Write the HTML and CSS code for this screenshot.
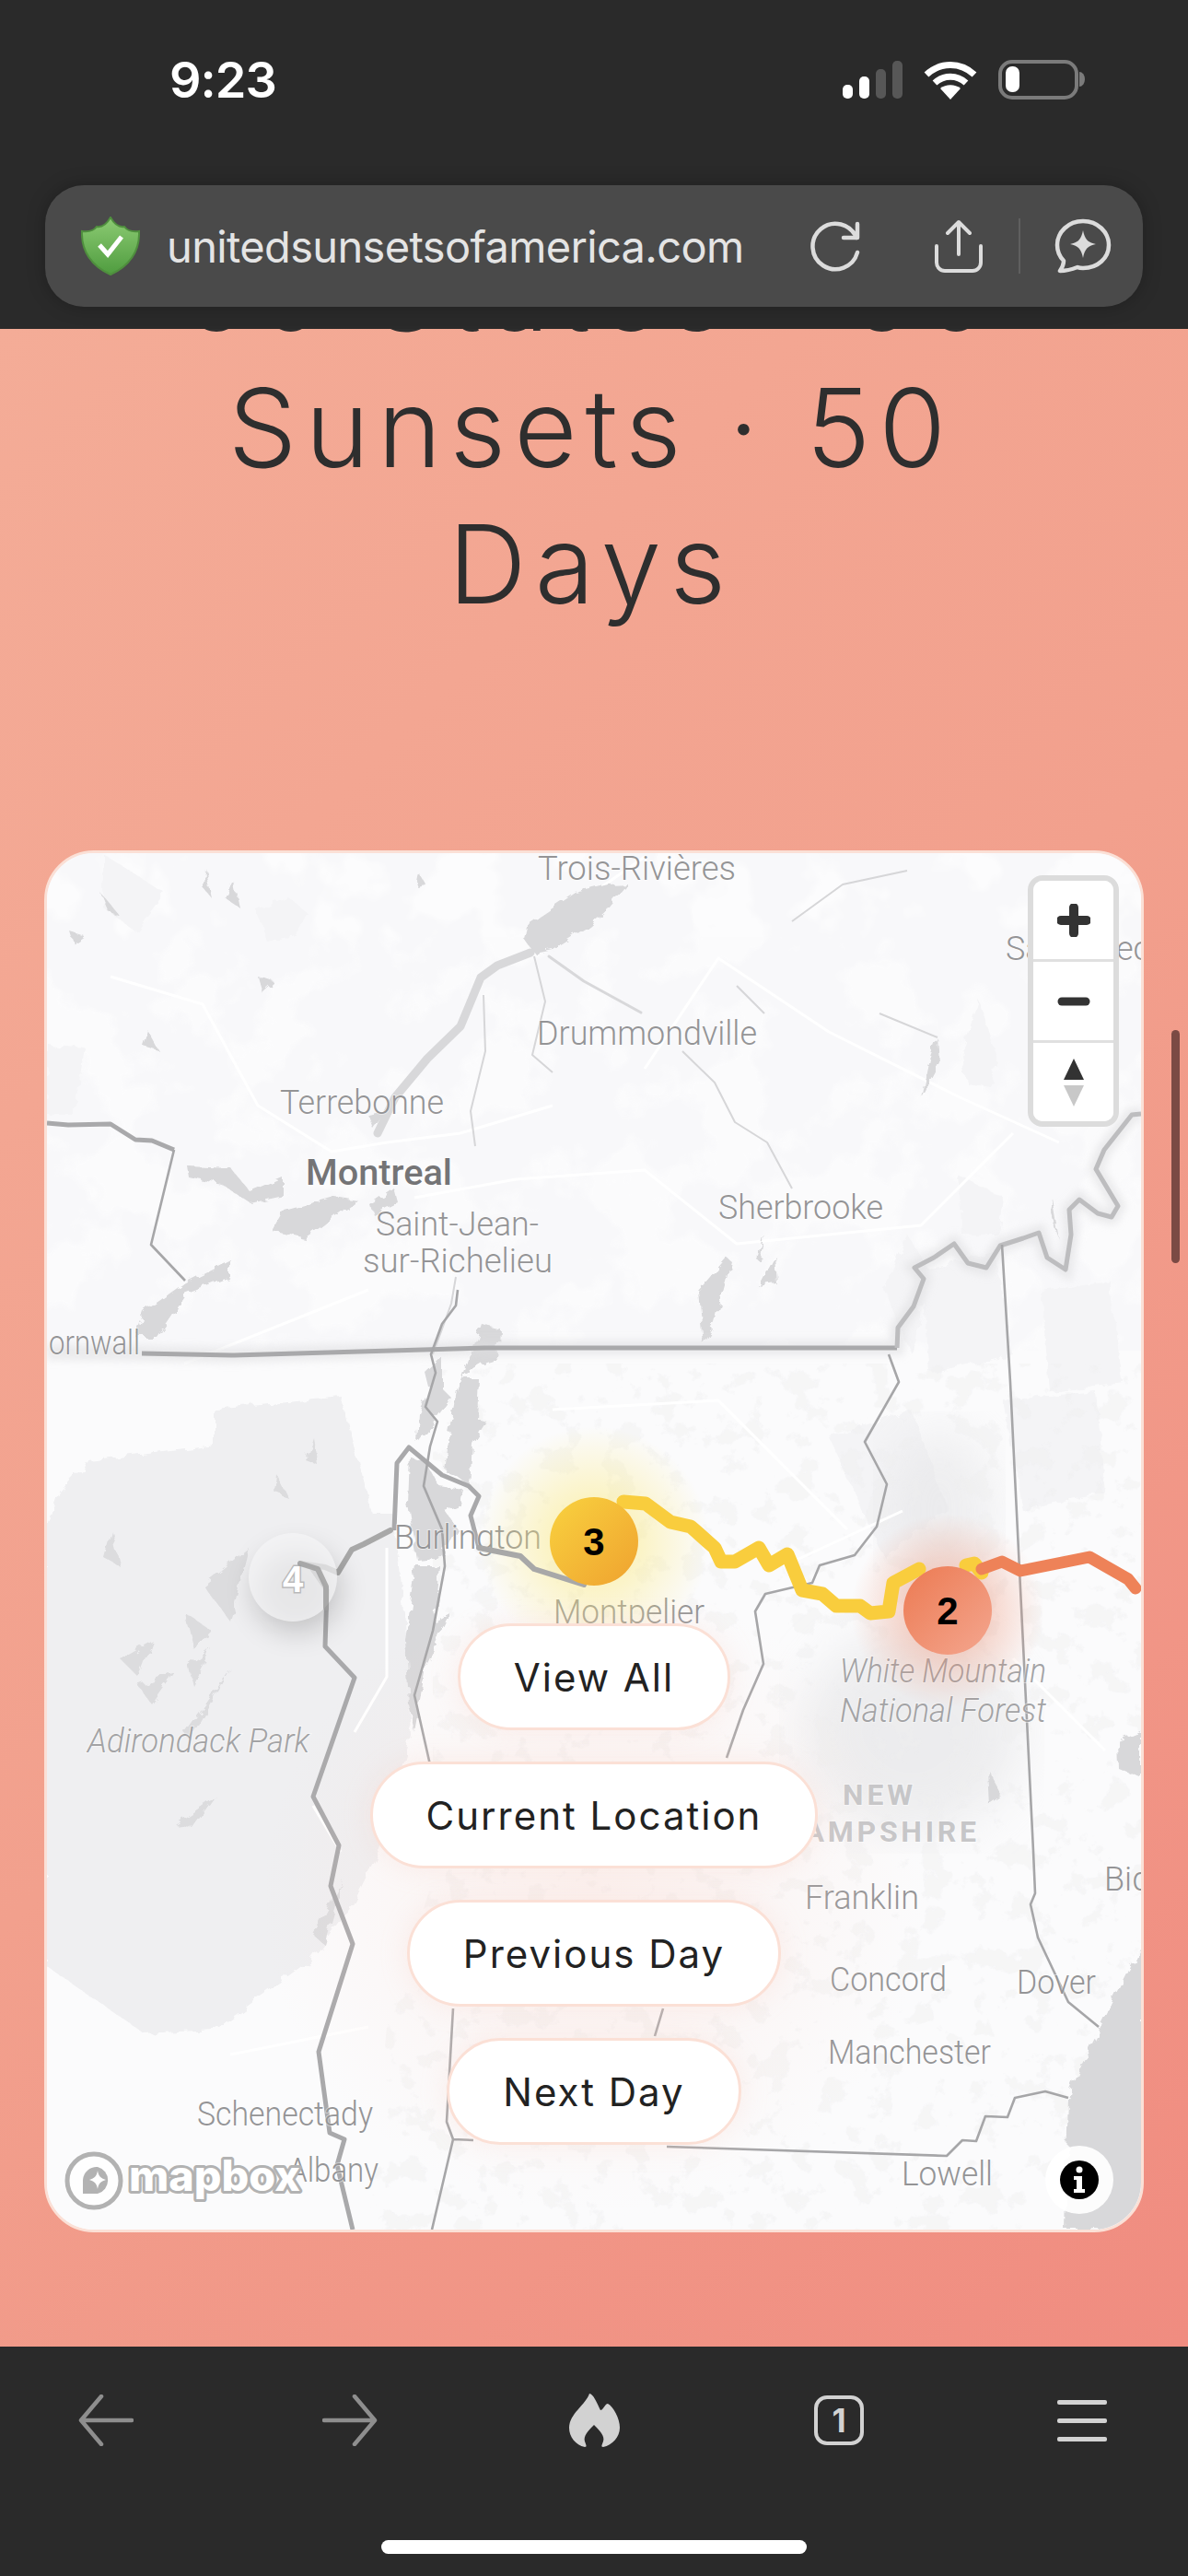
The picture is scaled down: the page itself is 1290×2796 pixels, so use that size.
FILE: index.html
```html
<!DOCTYPE html>
<html lang="en">
<head>
<meta charset="utf-8">
<title>United Sunsets of America</title>
<link rel="stylesheet" href="styles.css">
</head>
<body>
<div class="phone">
  <header class="top">
    <div class="status">
      <span class="time">9:23</span>
      <div class="status-icons">
        <svg class="ic-signal" width="65" height="41" viewBox="0 0 65 41"><rect x="0" y="26" width="11" height="15" rx="5" fill="#fff"/><rect x="18" y="17" width="11" height="24" rx="5" fill="#fff"/><rect x="36" y="9" width="11" height="32" rx="5" fill="#575757"/><rect x="54" y="0" width="11" height="41" rx="5" fill="#575757"/></svg>
        <svg class="ic-wifi" width="58" height="42" viewBox="0 0 58 42"><path d="M3 15C18 1 40 1 55 15M12 24C22 15 36 15 46 24" fill="none" stroke="#fff" stroke-width="7"/><path d="M29 42L18 30C24 25 34 25 40 30Z" fill="#fff"/></svg>
        <svg class="ic-batt" width="94" height="43" viewBox="0 0 94 43"><rect x="2" y="2" width="83" height="39" rx="13" fill="none" stroke="#7b7b7b" stroke-width="4"/><rect x="8" y="7" width="15" height="28" rx="7" fill="#fff"/><path d="M88 13a6 8 0 0 1 0 16Z" fill="#7b7b7b"/></svg>
      </div>
    </div>
    <div class="urlbar">
      <svg class="ic-shield" width="64" height="64" viewBox="0 0 64 64"><defs><linearGradient id="sh" x1="0" y1="0" x2="0" y2="1"><stop offset="0" stop-color="#8ccb73"/><stop offset="1" stop-color="#4f9c3f"/></linearGradient></defs><path d="M32 1C36 8 41 12 47 11C50 15 56 17 63 16C64 38 52 54 32 63C12 54 0 38 1 16C8 17 14 15 17 11C23 12 28 8 32 1Z" fill="url(#sh)" stroke="#4f8f3e" stroke-width="2"/><path d="M20 31L29 41L44 22" fill="none" stroke="#fff" stroke-width="5"/></svg>
      <span class="url">unitedsunsetsofamerica.com</span>
      <svg class="ic-reload" width="56" height="56" viewBox="0 0 56 56"><path d="M50 19A24.7 24.7 0 1 0 51 35" fill="none" stroke="#dcdcdc" stroke-width="4.5" stroke-linecap="round"/><path d="M51 4V19H36" fill="none" stroke="#dcdcdc" stroke-width="4.5" stroke-linecap="round" stroke-linejoin="round"/></svg>
      <svg class="ic-share" width="54" height="58" viewBox="0 0 54 58"><path d="M27 3V38M15 15L27 3L39 15M3 29V47A9 9 0 0 0 12 56H42A9 9 0 0 0 51 47V29" fill="none" stroke="#dcdcdc" stroke-width="4" stroke-linecap="round" stroke-linejoin="round"/></svg>
      <span class="url-sep"></span>
      <svg class="ic-chat" width="62" height="60" viewBox="0 0 62 60"><path d="M31 3C15 3 3 15 3 29C3 36 6 42 10 46C10 50 8 54 6 57C14 57 20 55 25 53C27 54 29 54 31 54C47 54 59 43 59 29C59 15 47 3 31 3Z" fill="none" stroke="#dcdcdc" stroke-width="4.5" stroke-linejoin="round"/><path d="M31 13C33 23 36 26 45 28C36 30 33 33 31 43C29 33 26 30 17 28C26 26 29 23 31 13Z" fill="#dcdcdc"/></svg>
    </div>
  </header>

  <main class="page">
    <h1 class="title">50 States · 50 Sunsets · 50 Days</h1>
    <section class="map">
      <svg class="map-svg" viewBox="51 926 1188 1494" width="1188" height="1494">
        <defs>
          <filter id="speckle" x="0" y="0" width="100%" height="100%"><feTurbulence type="fractalNoise" baseFrequency=".035" numOctaves="5" seed="11"/><feColorMatrix values="0 0 0 0 .85 0 0 0 0 .85 0 0 0 0 .86 12 0 0 0 -6.8"/><feGaussianBlur stdDeviation=".7"/></filter>
          <filter id="speckle2" x="0" y="0" width="100%" height="100%"><feTurbulence type="fractalNoise" baseFrequency=".012" numOctaves="4" seed="4"/><feColorMatrix values="0 0 0 0 1 0 0 0 0 1 0 0 0 0 1 10 0 0 0 -5"/></filter>
          <filter id="rough" x="-5%" y="-5%" width="110%" height="110%"><feTurbulence type="fractalNoise" baseFrequency=".07" numOctaves="3" seed="3" result="n"/><feDisplacementMap in="SourceGraphic" in2="n" scale="11"/></filter>
          <filter id="blur6"><feGaussianBlur stdDeviation="4"/></filter>
          <filter id="soft"><feGaussianBlur stdDeviation="26"/></filter>
          <filter id="shadow4" x="-50%" y="-50%" width="200%" height="200%"><feGaussianBlur stdDeviation="16"/></filter>
          <radialGradient id="glow3"><stop offset=".35" stop-color="#fbe97a" stop-opacity=".45"/><stop offset="1" stop-color="#fbe97a" stop-opacity="0"/></radialGradient>
          <radialGradient id="glow2"><stop offset=".45" stop-color="#ee8a6a" stop-opacity=".32"/><stop offset="1" stop-color="#ee8a6a" stop-opacity="0"/></radialGradient>
          <radialGradient id="glowBtn"><stop offset="0" stop-color="#fbd9cf" stop-opacity=".3"/><stop offset="1" stop-color="#fbd9cf" stop-opacity="0"/></radialGradient>
          <linearGradient id="m3" x1="0" y1="0" x2="1" y2="1"><stop offset="0" stop-color="#f9d23f"/><stop offset="1" stop-color="#efa22f"/></linearGradient>
          <linearGradient id="m2" x1="0" y1="0" x2="1" y2="1"><stop offset="0" stop-color="#ec7a52"/><stop offset="1" stop-color="#f4a68f"/></linearGradient>
          <mask id="southMask"><rect x="51" y="926" width="1188" height="1494" fill="#000"/><path d="M470 1480H1239V2420H400L420 2200L470 2040Z" fill="#fff"/></mask>
        </defs>
        <rect class="land" x="51" y="926" width="1188" height="1494"/>
        <rect class="land-south" x="51" y="1466" width="1188" height="954"/>
        <rect x="51" y="926" width="1188" height="540" filter="url(#speckle2)" opacity=".5"/>

        <!-- forests -->
        <g filter="url(#rough)">
          <path class="forest" d="M49 1665L65 1619L96 1586L234 1569V1529L370 1515L384 1569L404 1643H428L440 1760L446 1883L420 1990L380 2074L370 2083L337 2127L234 2203L156 2207L49 2133Z"/>
          <path class="forest-light" d="M51 1133L92 1137L80 1210H51ZM279 988L312 973L335 992L321 1015L290 1022ZM112 927L179 969L147 1011L112 985ZM1049 1175L1045 1145L1062 1084L1084 1153L1075 1179ZM1040 1275L1090 1300L1085 1340L1045 1340ZM985 1340L960 1400L990 1470L1010 1380Z"/>
          <path class="forest-light" d="M1000 1380L1080 1360L1100 1470L1010 1490ZM1130 1400L1205 1390L1220 1500L1140 1510ZM900 1560L990 1530L1030 1640L960 1690ZM1090 1520L1190 1510L1200 1620L1110 1640Z"/>
        </g>
        <ellipse cx="990" cy="1880" rx="120" ry="110" fill="#dfdfe1" opacity=".5" filter="url(#soft)"/>
        <ellipse cx="1020" cy="1640" rx="60" ry="90" fill="#e4e4e6" opacity=".55" filter="url(#soft)"/>
        <g mask="url(#southMask)"><rect x="400" y="1480" width="839" height="940" filter="url(#speckle)" opacity=".42"/></g>

        <!-- roads -->
        <path class="road" d="M120 1060L220 1090L280 1200L360 1250L420 1240L500 1230L600 1200M450 1300L560 1280L700 1270L800 1350L1000 1330L1100 1230M700 1160L780 1040L900 1120L1040 1190L1150 1240M600 1000L700 930M400 1400L200 1480M420 1680V1820L385 1880M340 1960L370 2010M600 1530L780 1520L920 1660M850 1700L980 1640M250 2230L400 2200M1100 1800L1200 1900"/>
        <path class="stream" d="M580 1038L592 1087L578 1145L600 1164M741 1141L776 1175L798 1218L833 1240L860 1290M525 1080L527 1141L511 1206L516 1244M495 1386L490 1415L470 1470M860 1000L915 960L985 945M955 1100L1018 1126M800 1070L830 1100"/>

        <!-- water -->
        <g filter="url(#rough)">
          <path class="water" d="M574 1003L625 969L660 960L683 959L661 986L640 1005L600 1030L580 1034L570 1020Z"/>
          <path class="water" d="M203 1265L250 1267L272 1294L308 1279L308 1298L272 1306L240 1285L205 1278ZM308 1313L362 1298L388 1302L348 1332L330 1344L295 1336ZM147 1451L156 1424L201 1392L250 1367L250 1386L201 1405L170 1451ZM402 1308L428 1290L432 1305L405 1318Z"/>
          <path class="water" d="M523 1437L543 1442L542 1460L540 1473L527 1477L510 1487L503 1497L520 1497L518 1540L528 1543L513 1567L510 1613L497 1603L483 1597L488 1557L497 1510Z"/>
          <path class="water" d="M462 1490L480 1473L480 1507L490 1517L473 1540L453 1567L455 1533L467 1510Z"/>
          <path class="water" d="M445 1580L463 1587L477 1613L503 1617L500 1633L483 1640L497 1660L480 1690L453 1693L443 1633Z"/>
          <path class="water" d="M452 1700L478 1700L472 1760L490 1750L462 1810L450 1880L444 1850L440 1780Z"/>
          <path class="water" d="M758 1401L789 1365L794 1369L776 1436L763 1459ZM824 1397L842 1363L844 1394ZM822 1367L829 1338L826 1370ZM1009 1149L1018 1126L1020 1153L1000 1191ZM1142 1300L1150 1345L1140 1315ZM455 948L462 960L452 962ZM109 969L132 996L118 990ZM223 942L230 975L222 965ZM254 957L260 985L245 975ZM76 1011L92 1016L80 1024ZM280 1060L298 1066L285 1078ZM160 1118L172 1140L155 1135ZM400 1210L420 1205L405 1225ZM1214 1890L1239 1880V1930L1215 1920ZM1072 1920L1088 1950L1074 1960Z"/>
          <path class="water-soft" d="M130 1800L165 1780L150 1820ZM230 1790L210 1830L205 1810ZM150 1830L190 1815L165 1850ZM250 1810L205 1890L200 1880ZM220 1720L270 1680L250 1760ZM200 1750L210 1790L230 1770ZM300 1600L312 1625L298 1620ZM340 1560L345 1590L332 1585ZM120 1660L130 1700L112 1690ZM190 1980L235 1950L210 1985ZM340 2100L372 2040L352 2110Z"/>
          <path class="water" d="M1242 2107L1200 2190L1175 2240L1160 2277L1156 2420H1242Z"/>
        </g>
        <path class="water-line" d="M576 1034L540 1048L522 1061L500 1114L464 1149L429 1191L410 1230" stroke-width="9"/>
        <path class="water-line" d="M596 1038L634 1065L696 1099" stroke-width="3"/>

        <!-- borders -->
        <path class="border-halo" d="M51 1468L154 1469L252 1471L527 1463L974 1463L975 1441L992 1418L1003 1388L993 1376L1014 1365L1036 1350L1051 1371L1071 1376L1086 1352L1111 1344L1128 1338L1137 1365L1157 1378L1163 1340L1161 1313L1172 1302L1192 1317L1207 1321L1214 1309L1190 1269L1199 1248L1229 1210L1239 1209"/>
        <path class="border-line" d="M154 1469L252 1471L527 1463L974 1463"/>
        <path class="border-line light" d="M974 1463L975 1441L992 1418L1003 1388L993 1376L1014 1365L1036 1350L1051 1371L1071 1376L1086 1352L1111 1344L1128 1338L1137 1365L1157 1378L1163 1340L1161 1313L1172 1302L1192 1317L1207 1321L1214 1309L1190 1269L1199 1248L1229 1210L1239 1209"/>
        <path class="border-line" d="M51 1219L74 1221L120 1220L147 1237L165 1238L189 1248"/>
        <path class="thin" d="M189 1248L164 1351L201 1390"/>
        <path class="border-line" d="M339 1703L355 1726L353 1787L385 1821L340 1950L368 2003L359 2047L383 2110L346 2227L358 2315L374 2322L366 2350L383 2420"/>
        <path class="border-line" d="M428 1661L431 1588L444 1571L480 1601L509 1613L520 1624L511 1645L520 1680"/>
        <path class="thin" d="M497 1400L495 1417L480 1437L468 1470L473 1490L462 1527L475 1543L467 1570L460 1613L480 1660L483 1700L470 1770L450 1840L468 1920M965 1470L976 1500L939 1565L963 1611L952 1657L928 1688L890 1699L882 1718L831 1730L820 1749L829 1806L807 1856L789 1908"/>
        <path class="thin" d="M1088 1351L1097 1500L1122 2009L1124 2055L1119 2067L1127 2103L1160 2173L1193 2200M724 2330L1028 2340L1045 2323L1060 2324L1070 2297L1094 2298L1102 2277L1135 2270L1160 2277"/>
        <path class="thin" d="M492 2180L485 2303L492 2322L514 2323M492 2322L469 2420M720 2180L711 2210"/>

        <!-- labels -->
        <text class="lbl" x="584" y="955" textLength="215" lengthAdjust="spacingAndGlyphs">Trois-Rivières</text>
        <text class="lbl" x="583" y="1134" textLength="239" lengthAdjust="spacingAndGlyphs">Drummondville</text>
        <text class="lbl" x="304" y="1209" textLength="178" lengthAdjust="spacingAndGlyphs">Terrebonne</text>
        <text class="lbl strong" x="332" y="1286" textLength="159" lengthAdjust="spacingAndGlyphs">Montreal</text>
        <text class="lbl" x="408" y="1341" textLength="177" lengthAdjust="spacingAndGlyphs">Saint-Jean-</text>
        <text class="lbl" x="394" y="1381" textLength="206" lengthAdjust="spacingAndGlyphs">sur-Richelieu</text>
        <text class="lbl" x="53" y="1470" textLength="99" lengthAdjust="spacingAndGlyphs">ornwall</text>
        <text class="lbl" x="1092" y="1042">Sa</text>
        <text class="lbl" x="1212" y="1042">ec</text>
        <text class="lbl" x="780" y="1323" textLength="179" lengthAdjust="spacingAndGlyphs">Sherbrooke</text>
        <text class="lbl" x="428" y="1681" textLength="160" lengthAdjust="spacingAndGlyphs">Burlington</text>
        <text class="lbl" x="601" y="1762" textLength="164" lengthAdjust="spacingAndGlyphs">Montpelier</text>
        <text class="lbl it" x="95" y="1902" textLength="241" lengthAdjust="spacingAndGlyphs">Adirondack Park</text>
        <text class="lbl it" x="912" y="1826" textLength="224" lengthAdjust="spacingAndGlyphs">White Mountain</text>
        <text class="lbl it" x="912" y="1869" textLength="224" lengthAdjust="spacingAndGlyphs">National Forest</text>
        <text class="lbl state" x="915" y="1959" textLength="80" lengthAdjust="spacingAndGlyphs">NEW</text>
        <text class="lbl state" x="847" y="1999" textLength="217" lengthAdjust="spacing">HAMPSHIRE</text>
        <text class="lbl" x="874" y="2072" textLength="124" lengthAdjust="spacingAndGlyphs">Franklin</text>
        <text class="lbl" x="1199" y="2052">Bid</text>
        <text class="lbl" x="901" y="2161" textLength="127" lengthAdjust="spacingAndGlyphs">Concord</text>
        <text class="lbl" x="1104" y="2164" textLength="86" lengthAdjust="spacingAndGlyphs">Dover</text>
        <text class="lbl" x="899" y="2240" textLength="177" lengthAdjust="spacingAndGlyphs">Manchester</text>
        <text class="lbl" x="214" y="2307" textLength="191" lengthAdjust="spacingAndGlyphs">Schenectady</text>
        <text class="lbl" x="313" y="2368" textLength="98" lengthAdjust="spacingAndGlyphs">Albany</text>
        <text class="lbl" x="979" y="2372" textLength="99" lengthAdjust="spacingAndGlyphs">Lowell</text>

        <!-- glows -->
        <circle cx="645" cy="1673" r="125" fill="url(#glow3)"/>
        <circle cx="1029" cy="1748" r="105" fill="url(#glow2)"/>
        <ellipse cx="645" cy="2060" rx="360" ry="340" fill="url(#glowBtn)"/>

        <!-- routes -->
        <path class="route-gray" d="M326 1697L353 1701L367 1707L382 1682L395 1676L424 1661M520 1680L565 1689L580 1703L634 1720"/>
        <path class="route-yellow" d="M677 1630L701 1632L728 1652L750 1657L776 1680L783 1695L798 1695L824 1680L835 1699L855 1687L860 1699L871 1726L893 1730L908 1743L934 1743L945 1751L965 1749L970 1718L998 1703M1049 1699L1058 1697L1066 1707"/>
        <path class="route-orange" d="M1066 1703L1088 1695L1108 1705L1168 1693L1183 1690L1225 1714L1233 1724"/>

        <!-- markers -->
        <ellipse cx="322" cy="1726" rx="46" ry="44" fill="#000" opacity=".2" filter="url(#shadow4)"/>
        <circle class="mk4" cx="318" cy="1712" r="48"/>
        <path class="route-gray over" d="M326 1697L345 1703L354 1722L354 1745"/>
        <text class="mk4-num" x="318" y="1728">4</text>
        <circle cx="645" cy="1673" r="48" fill="url(#m3)"/>
        <text class="mk-num" x="645" y="1688">3</text>
        <circle cx="1029" cy="1748" r="48" fill="url(#m2)"/>
        <text class="mk-num" x="1029" y="1763">2</text>

        <!-- mapbox logo -->
        <circle cx="102" cy="2367" r="29" fill="#fff" fill-opacity=".7" stroke="#b2b2b2" stroke-width="5"/>
        <path d="M106 2352A15 15 0 0 1 106 2381H90V2366A15 15 0 0 1 106 2352Z" fill="#b2b2b2"/>
        <path d="M106 2356C107 2362 109 2364 115 2366C109 2368 107 2370 106 2376C105 2370 103 2368 97 2366C103 2364 105 2362 106 2356Z" fill="#fff"/>
        <text class="mb" x="140" y="2378" textLength="186" lengthAdjust="spacingAndGlyphs">mapbox</text>

        <!-- info -->
        <circle cx="1172" cy="2366" r="37" fill="#fff" opacity=".92"/>
        <circle cx="1172" cy="2366" r="21" fill="#000"/>
        <circle cx="1172" cy="2355" r="3.5" fill="#fff"/>
        <path d="M1166 2362H1175V2376H1178V2380H1166V2376H1169V2366H1166Z" fill="#fff"/>
      </svg>

      <div class="zoom-ctl">
        <button class="zoom-btn"><svg width="36" height="36" viewBox="0 0 36 36"><path d="M18 4V32M4 18H32" stroke="#333" stroke-width="10" stroke-linecap="round"/></svg></button>
        <button class="zoom-btn"><svg width="36" height="12" viewBox="0 0 36 12"><path d="M5 6H31" stroke="#333" stroke-width="9" stroke-linecap="round"/></svg></button>
        <button class="zoom-btn last"><svg width="24" height="52" viewBox="0 0 24 52"><path d="M12 0L23 23H1Z" fill="#333"/><path d="M1 29H23L12 52Z" fill="#c8c8c8"/></svg></button>
      </div>

      <div class="actions">
        <button class="pill">View All</button>
        <button class="pill">Current Location</button>
        <button class="pill">Previous Day</button>
        <button class="pill">Next Day</button>
      </div>
    </section>
    <span class="scrollbar"></span>
  </main>

  <footer class="bottom">
    <nav class="tools">
      <svg width="60" height="56" viewBox="0 0 60 56"><path d="M25 2L3 28L25 54M4 28H58" fill="none" stroke="#8e8e8e" stroke-width="4.5" stroke-linecap="round" stroke-linejoin="round"/></svg>
      <svg width="60" height="56" viewBox="0 0 60 56"><path d="M35 2L57 28L35 54M2 28H56" fill="none" stroke="#8e8e8e" stroke-width="4.5" stroke-linecap="round" stroke-linejoin="round"/></svg>
      <svg class="flame" width="55" height="58" viewBox="0 0 55 58"><path d="M22 0C26 0 30 10 34 18C37 18 39 11 42 11C48 14 55 27 55 37C55 47 47 56 37 58C34 58 36 55 37 52C39 46 33 40 27 34C21 40 15 46 17 52C18 55 20 58 17 58C7 56 0 47 0 37C0 22 18 12 22 0Z" fill="#d2d2d2"/></svg>
      <span class="tab-count">1</span>
      <span class="burger"><i></i><i></i><i></i></span>
    </nav>
    <span class="home"></span>
  </footer>
</div>
</body>
</html>
```
FILE: styles.css
```css
* { box-sizing: border-box; }
html, body { margin: 0; padding: 0; background: #2a2a2a; }
.phone { width: 1290px; height: 2796px; display: flex; flex-direction: column; overflow: hidden; font-family: Inter, "Liberation Sans", sans-serif; }

/* top chrome */
.top { height: 357px; background: #2a2a2a; padding-top: 65px; flex: none; position: relative; z-index: 2; }
.status { display: flex; justify-content: space-between; align-items: center; height: 43px; padding: 0 112px 0 184px; }
.time { color: #fff; font-size: 54px; font-weight: 600; letter-spacing: -1px; line-height: 43px; }
.status-icons { display: flex; align-items: center; gap: 23px; }
.urlbar { margin: 93px 49px 0; height: 132px; border-radius: 42px; background: #4a4a4a; display: flex; align-items: center; padding: 0 34px 0 39px; box-shadow: 0 0 20px rgba(0,0,0,.25); }
.url { color: #e4e4e4; font-size: 47px; margin-left: 29px; flex: 1; white-space: nowrap; letter-spacing: -.65px; }
.ic-reload { margin-right: 78px; }
.ic-share { margin-right: 38px; }
.url-sep { width: 2px; height: 60px; background: #5f5f5f; margin-right: 37px; }

/* page */
.page { flex: 1; position: relative; overflow: hidden; padding: 0 48px; background: linear-gradient(135deg, #f4ac97 0%, #f2a08d 50%, #f08c80 100%); }
.title { margin: -115px 0 237px; font-size: 118px; line-height: 148px; font-weight: 300; letter-spacing: 9px; text-align: center; color: #2e2e2e; padding: 0 100px 0 94px; }
.map { position: relative; width: 1194px; height: 1500px; border: 3px solid #fbe0d6; border-radius: 54px; overflow: hidden; background: #f8f8fa; }
.map-svg { display: block; }
.land { fill: #f8f8fa; }
.land-south { fill: #fbfbfc; }
.forest { fill: #efeff1; }
.forest-light { fill: #f4f4f6; }
.water { fill: #d8d8da; }
.water-soft { fill: #dcdcde; }
.water-line { fill: none; stroke: #d8d8da; stroke-linecap: round; stroke-linejoin: round; }
.road { fill: none; stroke: #fff; stroke-width: 3; stroke-linejoin: round; }
.stream { fill: none; stroke: #d6d6d8; stroke-width: 2; stroke-linejoin: round; }
.border-halo { fill: none; stroke: #dddddf; stroke-width: 16; opacity: .55; filter: url(#blur6); }
.border-line { fill: none; stroke: #a9a9ab; stroke-width: 5; stroke-linejoin: round; }
.border-line.light { stroke: #bdbdbf; }
.thin { fill: none; stroke: #a6a6a8; stroke-width: 2.6; stroke-linejoin: round; }
.lbl { font-family: Roboto, "Liberation Sans", sans-serif; font-size: 36px; font-weight: 300; fill: #949496; stroke: #fff; stroke-opacity: .45; stroke-width: 2px; paint-order: stroke; }
.lbl.strong { font-weight: 500; fill: #747476; font-size: 38px; }
.lbl.it { font-style: italic; fill: #a3a3a5; }
.lbl.state { font-weight: 700; fill: #c6c6c8; font-size: 32px; letter-spacing: 4px; }
.route-gray { fill: none; stroke: #a8a8a8; stroke-width: 6; stroke-linejoin: round; stroke-linecap: round; }
.route-gray.over { stroke: #9f9f9f; opacity: .85; }
.route-yellow { fill: none; stroke: #f9cd3d; stroke-width: 15; stroke-linejoin: round; stroke-linecap: round; }
.route-orange { fill: none; stroke: #ee8258; stroke-width: 13; stroke-linejoin: round; stroke-linecap: round; }
.mk4 { fill: #f5f5f6; opacity: .72; }
.mk4-num { font-family: "Liberation Sans", sans-serif; font-weight: 700; font-size: 40px; text-anchor: middle; fill: #fff; stroke: #9a9a9a; stroke-width: 3px; stroke-opacity: .6; paint-order: stroke; }
.mk-num { font-family: "Liberation Sans", sans-serif; font-weight: 700; font-size: 42px; text-anchor: middle; fill: #000; }
.mb { font-family: Inter, sans-serif; font-weight: 800; font-size: 46px; fill: #fff; stroke: #b2b2b2; stroke-width: 6px; stroke-linejoin: round; paint-order: stroke; }

.zoom-ctl { position: absolute; top: 24px; right: 24px; width: 99px; height: 273px; border: 6px solid #dcdcdc; border-radius: 16px; background: #fff; display: flex; flex-direction: column; overflow: hidden; }
.zoom-btn { flex: 1; border: 0; border-bottom: 3px solid #e0e0e0; background: #fff; padding: 0; display: flex; align-items: center; justify-content: center; }
.zoom-btn.last { border-bottom: 0; }

.actions { position: absolute; top: 836px; left: 0; right: 0; display: flex; flex-direction: column; align-items: center; gap: 34px; }
.pill { height: 116px; padding: 0 58px; border: 3px solid #fbe0d6; border-radius: 58px; background: #fff; color: #222; font-family: Inter, sans-serif; font-size: 42px; font-weight: 400; letter-spacing: 2px; white-space: nowrap; box-shadow: 0 0 30px rgba(251,200,185,.22); }

.scrollbar { position: absolute; top: 761px; left: 1272px; width: 9px; height: 253px; border-radius: 5px; background: #7b4a44; }

/* bottom chrome */
.bottom { height: 249px; flex: none; background: #2a2a2a; padding-top: 51px; display: flex; flex-direction: column; align-items: center; position: relative; }
.tools { width: 100%; height: 58px; padding-left: 85px; display: flex; gap: 205px; align-items: center; }
.flame { margin-left: 3px; margin-right: 6px; }
.tab-count { width: 54px; height: 54px; border: 4.5px solid #d2d2d2; border-radius: 14px; color: #d2d2d2; font-size: 35px; font-weight: 700; display: flex; align-items: center; justify-content: center; margin-right: 5px; }
.burger { width: 54px; height: 45px; display: flex; flex-direction: column; justify-content: space-between; }
.burger i { display: block; height: 5px; border-radius: 2px; background: #d2d2d2; }
.home { width: 462px; height: 15px; border-radius: 8px; background: #fff; margin-top: 101px; }
```
